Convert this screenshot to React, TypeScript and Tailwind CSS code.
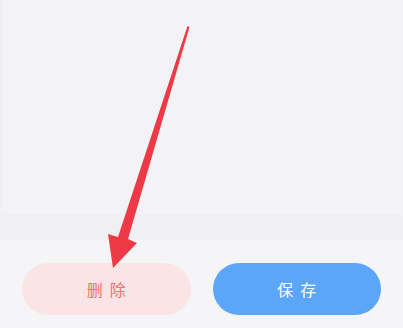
export default function App() {
  return (
    <div className="relative h-[328px] w-[403px] overflow-hidden bg-[#f3f3f6] font-['Noto_Sans_CJK_SC',sans-serif]">
      <div className="flex h-full flex-col">
        {/* content area */}
        <div className="flex flex-1 flex-col border-x border-[#efeff3] px-px">
          <div className="flex-1 bg-[#f3f3f7]" />
          <div className="h-[26px] bg-[#f0f0f4]" />
        </div>

        {/* bottom actions */}
        <div className="grid h-[88px] grid-cols-2 gap-[22px] bg-[#f5f5f8] px-[22px] pt-[23px]">
          <button className="flex h-[52px] items-center justify-center gap-[7px] rounded-full bg-[#fbe4e5] text-[16px] text-[#f07070]">
            <span>删</span>
            <span>除</span>
          </button>
          <button className="flex h-[52px] items-center justify-center gap-[7px] rounded-full bg-[#5ba6f8] text-[16px] text-white">
            <span>保</span>
            <span>存</span>
          </button>
        </div>
      </div>

      {/* annotation arrow */}
      <svg className="pointer-events-none absolute inset-0" width="403" height="328" viewBox="0 0 403 328">
        <polygon
          points="187.5,26 189.5,27 128,239 137,243 113,268 108,234 118,237"
          fill="#ee3a46"
        />
      </svg>
    </div>
  );
}
